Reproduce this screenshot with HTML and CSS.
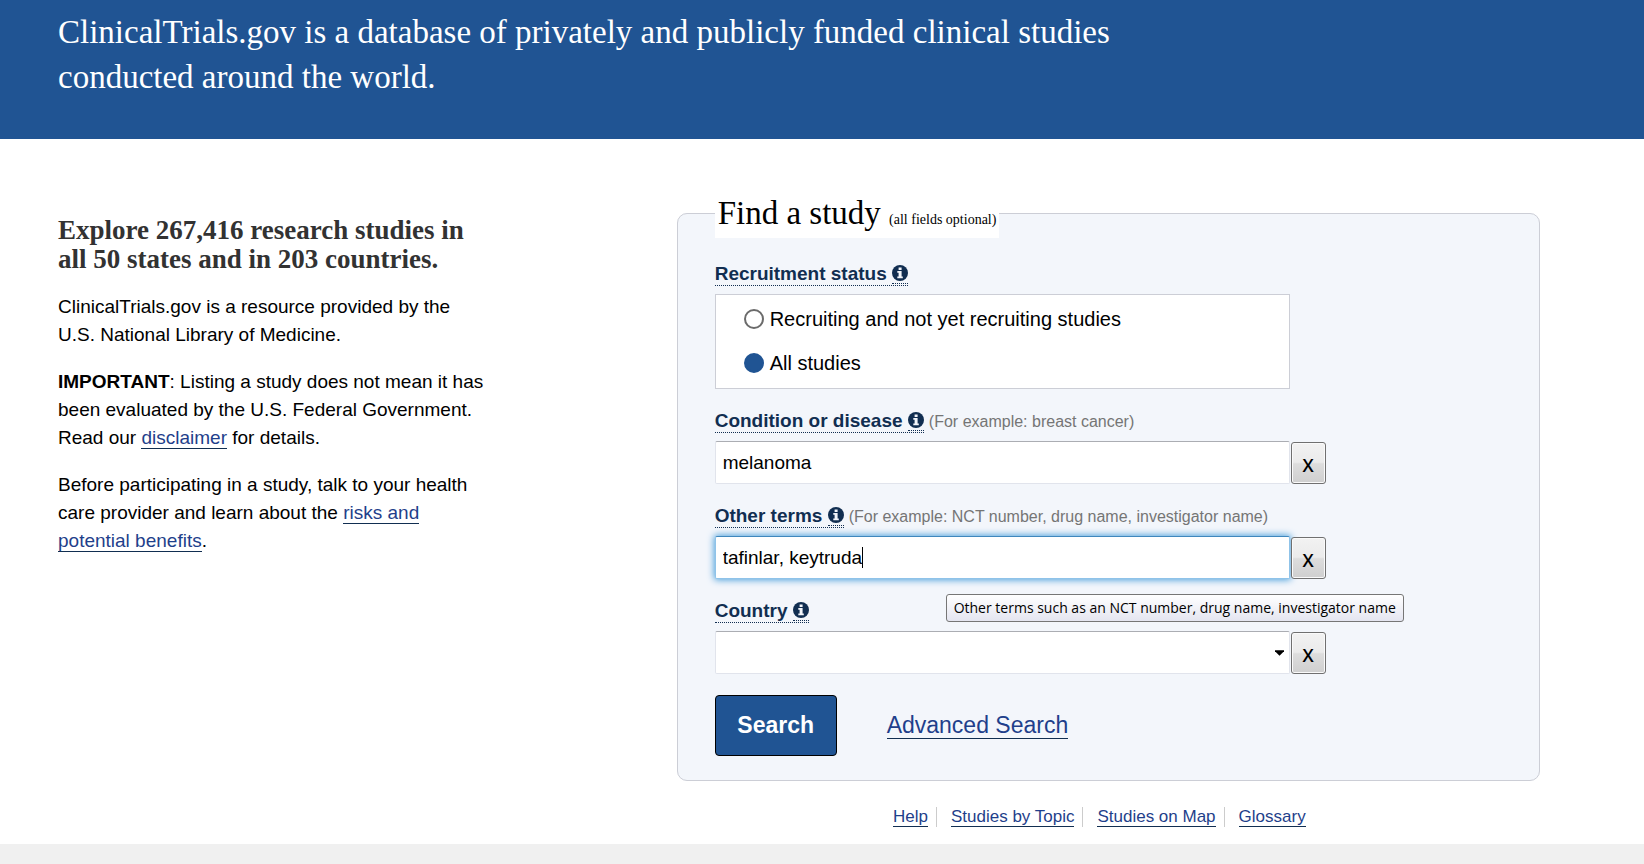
FILE: index.html
```html
<!DOCTYPE html>
<html lang="en">
<head>
<meta charset="utf-8">
<meta name="viewport" content="width=device-width, initial-scale=1">
<title>ClinicalTrials.gov</title>
<link rel="stylesheet" href="styles.css">
</head>
<body>
<svg class="sprite" aria-hidden="true">
  <symbol id="info" viewBox="0 0 16 16">
    <circle cx="8" cy="8" r="8" fill="#112e51"/>
    <path fill="#f3f6fb" d="M6.6 2.4h3v2.5h-3zM5.3 6h4.3v5.5h1.2v1.7H5.3v-1.7h1.3V7.7H5.3z"/>
  </symbol>
</svg>
<header class="banner">
  <p class="tagline">ClinicalTrials.gov is a database of privately and publicly funded clinical studies conducted around the world.</p>
</header>
<main class="main">
  <section class="intro">
    <h1 class="intro-title">Explore 267,416 research studies in<br>all 50 states and in 203 countries.</h1>
    <p class="intro-text">ClinicalTrials.gov is a resource provided by the<br>U.S. National Library of Medicine.</p>
    <p class="intro-text"><strong>IMPORTANT</strong>: Listing a study does not mean it has been evaluated by the U.S. Federal Government. Read our <a class="link" href="#disclaimer">disclaimer</a> for details.</p>
    <p class="intro-text">Before participating in a study, talk to your health care provider and learn about the <a class="link" href="#risks">risks and potential benefits</a>.</p>
  </section>
  <section class="finder">
    <form>
      <fieldset class="card">
        <legend class="card-title">Find a study <small class="card-note">(all fields optional)</small></legend>
        <div class="field">
          <div class="field-head"><span class="term" id="status-label">Recruitment status <svg class="info"><use href="#info"/></svg></span></div>
          <div class="choices" role="radiogroup" aria-labelledby="status-label">
            <label class="choice"><input class="radio" type="radio" name="status">Recruiting and not yet recruiting studies</label>
            <label class="choice"><input class="radio" type="radio" name="status" checked>All studies</label>
          </div>
        </div>
        <div class="field">
          <div class="field-head"><label class="term" for="cond">Condition or disease <svg class="info"><use href="#info"/></svg></label><span class="hint">(For example: breast cancer)</span></div>
          <div class="entry"><input class="box" id="cond" type="text" value="melanoma"><button class="clear" type="button" aria-label="Clear condition">X</button></div>
        </div>
        <div class="field">
          <div class="field-head"><label class="term" for="terms">Other terms <svg class="info"><use href="#info"/></svg></label><span class="hint">(For example: NCT number, drug name, investigator name)</span></div>
          <div class="entry"><input class="box active" id="terms" type="text" value="tafinlar, keytruda"><button class="clear" type="button" aria-label="Clear other terms">X</button>
            <span class="caret"></span>
            <div class="tooltip" role="tooltip">Other terms such as an NCT number, drug name, investigator name</div>
          </div>
        </div>
        <div class="field">
          <div class="field-head"><label class="term" for="country">Country <svg class="info"><use href="#info"/></svg></label></div>
          <div class="entry">
            <span class="select-wrap"><select class="box select" id="country"><option></option></select><svg class="arrow" viewBox="0 0 10 6"><path d="M0 0h10v1L5 6 0 1z"/></svg></span>
            <button class="clear" type="button" aria-label="Clear country">X</button>
          </div>
        </div>
        <div class="actions">
          <button class="search" type="submit">Search</button>
          <a class="link advanced" href="#advanced">Advanced Search</a>
        </div>
      </fieldset>
    </form>
    <nav class="links">
      <span class="links-item"><a class="link" href="#help">Help</a></span>
      <span class="links-item"><a class="link" href="#topic">Studies by Topic</a></span>
      <span class="links-item"><a class="link" href="#map">Studies on Map</a></span>
      <span class="links-item"><a class="link" href="#glossary">Glossary</a></span>
    </nav>
  </section>
</main>
<footer class="footer"></footer>
</body>
</html>
```
FILE: styles.css
```css
* { box-sizing: border-box; }
body {
  margin: 0;
  min-height: 100vh;
  display: flex;
  flex-direction: column;
  background: #fff;
  color: #000;
  font-family: "Liberation Sans", Arial, sans-serif;
  font-size: 19px;
  line-height: 28px;
}
.sprite { display: none; }
.banner { padding: 10px 58px 39px; background: #205493; color: #fff; }
.tagline {
  margin: 0;
  max-width: 1080px;
  font-family: "Liberation Serif", serif;
  font-size: 33px;
  line-height: 45px;
}
.main {
  display: grid;
  grid-template-columns: minmax(0, 5fr) minmax(0, 7fr);
  gap: 2px;
  padding: 49px 104px 17px 58px;
}
.intro { max-width: 432px; padding-top: 28px; }
.intro-title {
  margin: 0 0 19px;
  color: #323232;
  font-family: "Liberation Serif", serif;
  font-size: 27px;
  line-height: 29px;
  white-space: nowrap;
}
.intro-text { margin: 0 0 19px; }
.link { color: #1f3f8b; text-decoration: none; border-bottom: 1px solid #112e51; }
.card {
  margin: 0;
  min-width: 0;
  padding: 25px 37px 24px;
  border: 1px solid #ccced6;
  border-radius: 10px;
  background: #f3f6fb;
}
.card-title {
  padding: 0 3px;
  background: #fff;
  font-family: "Liberation Serif", serif;
  font-size: 33px;
  line-height: 50px;
}
.card-note { font-size: 14px; line-height: 14px; }
.field { margin-bottom: 21px; }
.field-head { display: flex; align-items: flex-end; gap: 5px; height: 23px; margin-bottom: 8px; }
.term {
  color: #112e51;
  font-size: 19px;
  font-weight: bold;
  line-height: 22px;
  border-bottom: 1px dotted #112e51;
}
.info { width: 16px; height: 19px; padding-bottom: 2px; vertical-align: -4px; border-bottom: 1px dotted #112e51; }
.hint { color: #757575; font-size: 16px; line-height: 22px; }
.choices { max-width: 575px; padding: 2px 28px 3px; border: 1px solid #ccced6; background: #fff; }
.choice { display: flex; align-items: center; gap: 6px; height: 44px; font-size: 20px; }
.radio {
  appearance: none;
  width: 20px;
  height: 20px;
  margin: 0;
  border: 2px solid #6b6b6b;
  border-radius: 50%;
  background: #fff;
}
.radio:checked { border-color: #205493; background: #205493; }
.entry { position: relative; display: grid; grid-template-columns: minmax(0, 575px) 35px; gap: 1px; align-items: center; }
.box {
  width: 100%;
  height: 43px;
  padding: 0 7px;
  border: 1px solid #e1e4ec;
  border-top-color: #abadb3;
  border-radius: 2px;
  background: #fff;
  color: #000;
  font-family: inherit;
  font-size: 19px;
  outline: none;
}
.active { border-color: #8fc3e9; border-top-color: #3f87bd; box-shadow: 0 0 7px 1px #4a9fdb; }
.caret { position: absolute; left: 147px; top: 11px; width: 1px; height: 21px; background: #000; }
.select-wrap { position: relative; display: flex; }
.select { appearance: none; }
.arrow { position: absolute; right: 6px; top: 19px; width: 9px; height: 6px; pointer-events: none; }
.clear {
  height: 42px;
  padding: 4px 0 0;
  border: 1px solid #707070;
  border-radius: 3px;
  background: linear-gradient(#f2f2f2, #ebebeb 48%, #dddddd 52%, #cfcfcf);
  box-shadow: inset 0 0 0 1px #fafafa;
  font-family: "Open Sans", sans-serif;
  font-size: 18px;
  font-weight: 600;
}
.tooltip {
  position: absolute;
  top: 58px;
  left: 231px;
  padding: 0 7px;
  border: 1px solid #767676;
  border-radius: 3px;
  background: linear-gradient(#fff, #e4e5f0);
  font-family: "Open Sans", sans-serif;
  font-size: 14px;
  line-height: 26px;
  white-space: nowrap;
  z-index: 1;
}
.actions { display: flex; align-items: center; gap: 50px; }
.search {
  width: 122px;
  height: 61px;
  border: 1px solid #000;
  border-radius: 4px;
  background: #205493;
  color: #fff;
  font-family: inherit;
  font-size: 23px;
  font-weight: bold;
}
.advanced { font-size: 23px; line-height: 26px; }
.links { display: flex; justify-content: center; align-items: center; margin-top: 26px; padding-right: 24px; }
.links-item { padding: 0 8px 0 14px; font-size: 17px; line-height: 20px; border-right: 1px solid #ccc; }
.links-item:last-child { border-right: 0; }
.footer { flex: 1; min-height: 19px; background: #f0f0f0; }
```
